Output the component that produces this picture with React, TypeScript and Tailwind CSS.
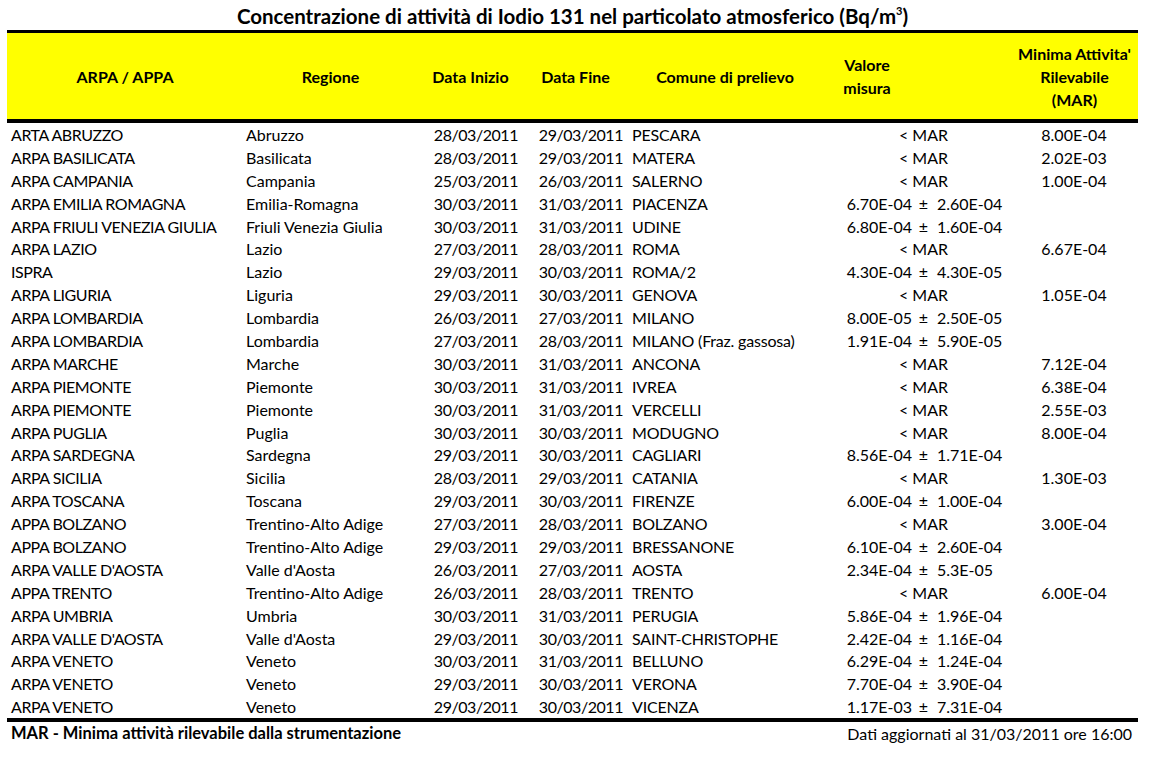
import React from "react";

type Row = {
  ente: string;
  regione: string;
  inizio: string;
  fine: string;
  comune: string;
  valore?: string;
  errore?: string;
  mar?: string;
};

const rows: Row[] = [
  { ente: "ARTA ABRUZZO", regione: "Abruzzo", inizio: "28/03/2011", fine: "29/03/2011", comune: "PESCARA", mar: "8.00E-04" },
  { ente: "ARPA BASILICATA", regione: "Basilicata", inizio: "28/03/2011", fine: "29/03/2011", comune: "MATERA", mar: "2.02E-03" },
  { ente: "ARPA CAMPANIA", regione: "Campania", inizio: "25/03/2011", fine: "26/03/2011", comune: "SALERNO", mar: "1.00E-04" },
  { ente: "ARPA EMILIA ROMAGNA", regione: "Emilia-Romagna", inizio: "30/03/2011", fine: "31/03/2011", comune: "PIACENZA", valore: "6.70E-04", errore: "2.60E-04" },
  { ente: "ARPA FRIULI VENEZIA GIULIA", regione: "Friuli Venezia Giulia", inizio: "30/03/2011", fine: "31/03/2011", comune: "UDINE", valore: "6.80E-04", errore: "1.60E-04" },
  { ente: "ARPA LAZIO", regione: "Lazio", inizio: "27/03/2011", fine: "28/03/2011", comune: "ROMA", mar: "6.67E-04" },
  { ente: "ISPRA", regione: "Lazio", inizio: "29/03/2011", fine: "30/03/2011", comune: "ROMA/2", valore: "4.30E-04", errore: "4.30E-05" },
  { ente: "ARPA LIGURIA", regione: "Liguria", inizio: "29/03/2011", fine: "30/03/2011", comune: "GENOVA", mar: "1.05E-04" },
  { ente: "ARPA LOMBARDIA", regione: "Lombardia", inizio: "26/03/2011", fine: "27/03/2011", comune: "MILANO", valore: "8.00E-05", errore: "2.50E-05" },
  { ente: "ARPA LOMBARDIA", regione: "Lombardia", inizio: "27/03/2011", fine: "28/03/2011", comune: "MILANO (Fraz. gassosa)", valore: "1.91E-04", errore: "5.90E-05" },
  { ente: "ARPA MARCHE", regione: "Marche", inizio: "30/03/2011", fine: "31/03/2011", comune: "ANCONA", mar: "7.12E-04" },
  { ente: "ARPA PIEMONTE", regione: "Piemonte", inizio: "30/03/2011", fine: "31/03/2011", comune: "IVREA", mar: "6.38E-04" },
  { ente: "ARPA PIEMONTE", regione: "Piemonte", inizio: "30/03/2011", fine: "31/03/2011", comune: "VERCELLI", mar: "2.55E-03" },
  { ente: "ARPA PUGLIA", regione: "Puglia", inizio: "30/03/2011", fine: "30/03/2011", comune: "MODUGNO", mar: "8.00E-04" },
  { ente: "ARPA SARDEGNA", regione: "Sardegna", inizio: "29/03/2011", fine: "30/03/2011", comune: "CAGLIARI", valore: "8.56E-04", errore: "1.71E-04" },
  { ente: "ARPA SICILIA", regione: "Sicilia", inizio: "28/03/2011", fine: "29/03/2011", comune: "CATANIA", mar: "1.30E-03" },
  { ente: "ARPA TOSCANA", regione: "Toscana", inizio: "29/03/2011", fine: "30/03/2011", comune: "FIRENZE", valore: "6.00E-04", errore: "1.00E-04" },
  { ente: "APPA BOLZANO", regione: "Trentino-Alto Adige", inizio: "27/03/2011", fine: "28/03/2011", comune: "BOLZANO", mar: "3.00E-04" },
  { ente: "APPA BOLZANO", regione: "Trentino-Alto Adige", inizio: "29/03/2011", fine: "29/03/2011", comune: "BRESSANONE", valore: "6.10E-04", errore: "2.60E-04" },
  { ente: "ARPA VALLE D'AOSTA", regione: "Valle d'Aosta", inizio: "26/03/2011", fine: "27/03/2011", comune: "AOSTA", valore: "2.34E-04", errore: "5.3E-05" },
  { ente: "APPA TRENTO", regione: "Trentino-Alto Adige", inizio: "26/03/2011", fine: "28/03/2011", comune: "TRENTO", mar: "6.00E-04" },
  { ente: "ARPA UMBRIA", regione: "Umbria", inizio: "30/03/2011", fine: "31/03/2011", comune: "PERUGIA", valore: "5.86E-04", errore: "1.96E-04" },
  { ente: "ARPA VALLE D'AOSTA", regione: "Valle d'Aosta", inizio: "29/03/2011", fine: "30/03/2011", comune: "SAINT-CHRISTOPHE", valore: "2.42E-04", errore: "1.16E-04" },
  { ente: "ARPA VENETO", regione: "Veneto", inizio: "30/03/2011", fine: "31/03/2011", comune: "BELLUNO", valore: "6.29E-04", errore: "1.24E-04" },
  { ente: "ARPA VENETO", regione: "Veneto", inizio: "29/03/2011", fine: "30/03/2011", comune: "VERONA", valore: "7.70E-04", errore: "3.90E-04" },
  { ente: "ARPA VENETO", regione: "Veneto", inizio: "29/03/2011", fine: "30/03/2011", comune: "VICENZA", valore: "1.17E-03", errore: "7.31E-04" },
];

const cols = "grid grid-cols-[236px_175px_105px_105px_194px_188px_128px]";

export default function App() {
  return (
    <div
      className="w-[1158px] h-[761px] bg-white text-black overflow-hidden"
      style={{ fontFamily: "Lato, 'Open Sans', sans-serif" }}
    >
      <div className="ml-[7px] w-[1131px]">
        {/* Title */}
        <div className="h-[30px] flex items-end justify-center pb-[2px]">
          <h1 className="text-[20.5px] font-bold leading-[24px] whitespace-nowrap">
            Concentrazione di attività di Iodio 131 nel particolato atmosferico (Bq/m
            <sup className="text-[11px] relative top-[-9px]">3</sup>)
          </h1>
        </div>

        {/* Header */}
        <div className={`${cols} h-[93px] border-t-[3px] border-b-[4px] border-black bg-[#ffff00] items-center text-[16px] font-bold leading-[23px]`}>
          <div className="text-center">ARPA / APPA</div>
          <div className="text-center">Regione</div>
          <div className="text-center">Data Inizio</div>
          <div className="text-center">Data Fine</div>
          <div className="text-center">Comune di prelievo</div>
          <div className="w-[90px] text-center">
            Valore
            <br />
            misura
          </div>
          <div className="text-center pl-[1px]">
            Minima Attivita'
            <br />
            Rilevabile
            <br />
            (MAR)
          </div>
        </div>

        {/* Rows */}
        <div className="text-[16px] leading-[23px]">
          {rows.map((r, i) => (
            <div key={i} className={`${cols} h-[22.9px] items-center whitespace-nowrap`}>
              <div className="pl-[4px] tracking-[-0.45px]">{r.ente}</div>
              <div className="pl-[3px]">{r.regione}</div>
              <div className="text-right pr-[5px] tracking-[-0.45px]">{r.inizio}</div>
              <div className="text-right pr-[5px] tracking-[-0.45px]">{r.fine}</div>
              <div className="pl-[4px] tracking-[-0.2px]">{r.comune}</div>
              {r.valore ? (
                <div className="flex">
                  <span className="w-[90px] text-right">{r.valore}</span>
                  <span className="w-[20px] text-center pl-[3px]">±</span>
                  <span className="pl-[5px]">{r.errore}</span>
                </div>
              ) : (
                <div className="text-right pr-[62px]">&lt; MAR</div>
              )}
              <div className="text-center">{r.mar ?? ""}</div>
            </div>
          ))}
        </div>

        {/* Footer */}
        <div className="border-t-[4px] border-black flex justify-between items-center h-[26px] leading-[23px] whitespace-nowrap">
          <span className="pl-[4px] font-bold text-[16.5px]">MAR - Minima attività rilevabile dalla strumentazione</span>
          <span className="pr-[6px] text-[16px]">Dati aggiornati al 31/03/2011 ore 16:00</span>
        </div>
      </div>
    </div>
  );
}
